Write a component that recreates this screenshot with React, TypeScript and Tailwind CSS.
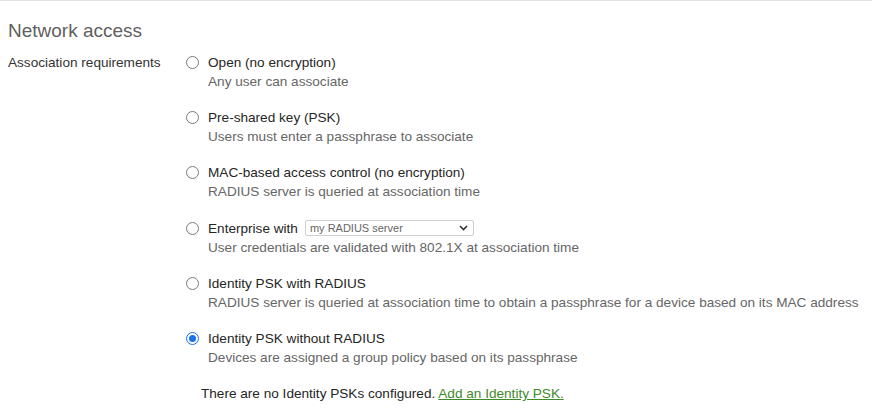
import React from "react";

type Opt = { label: string; desc: string; checked?: boolean; select?: boolean };

const options: Opt[] = [
  { label: "Open (no encryption)", desc: "Any user can associate" },
  { label: "Pre-shared key (PSK)", desc: "Users must enter a passphrase to associate" },
  { label: "MAC-based access control (no encryption)", desc: "RADIUS server is queried at association time" },
  { label: "Enterprise with", desc: "User credentials are validated with 802.1X at association time", select: true },
  { label: "Identity PSK with RADIUS", desc: "RADIUS server is queried at association time to obtain a passphrase for a device based on its MAC address" },
  { label: "Identity PSK without RADIUS", desc: "Devices are assigned a group policy based on its passphrase", checked: true },
];

function Radio({ checked }: { checked?: boolean }) {
  if (checked) {
    return (
      <span className="mt-[3px] flex h-[13px] w-[13px] shrink-0 items-center justify-center rounded-full border-[1.5px] border-[#1a73e8] bg-white">
        <span className="h-[7px] w-[7px] rounded-full bg-[#1a73e8]" />
      </span>
    );
  }
  return <span className="mt-[3px] block h-[13px] w-[13px] shrink-0 rounded-full border border-[#7a7a7a] bg-white" />;
}

export default function App() {
  return (
    <div
      className="h-[414px] w-full overflow-hidden border-t border-[#e2e2e2] bg-white pl-2 text-[13.6px] leading-[19px] text-[#333]"
      style={{ fontFamily: '"Liberation Sans", Arial, sans-serif' }}
    >
      <div className="pt-[18px] text-[19px] leading-[24px] text-[#5f5f5f]">Network access</div>
      <div className="mt-[10px] flex">
        <div className="w-[178px] shrink-0 text-[#333]">Association requirements</div>
        <div className="flex flex-col gap-[17.2px]">
          {options.map((o) => (
            <div key={o.label} className="flex items-start">
              <Radio checked={o.checked} />
              <div className="ml-[9px] flex flex-col">
                <div className="flex h-[19px] items-center text-[#262626]">
                  <span>{o.label}</span>
                  {o.select && (
                    <div className="ml-[7px] flex h-[16px] w-[169px] items-center justify-between rounded-[2px] border border-[#cfcfcf] bg-white pl-[4px] pr-[5px] text-[11px] leading-[14px] text-[#666]">
                      <span>my RADIUS server</span>
                      <svg width="9" height="6" viewBox="0 0 9 6">
                        <path d="M1 1 L4.5 4.5 L8 1" fill="none" stroke="#333" strokeWidth="1.6" />
                      </svg>
                    </div>
                  )}
                </div>
                <div className="text-[#666]">{o.desc}</div>
              </div>
            </div>
          ))}
          <div className="ml-[15px] text-[#262626]">
            There are no Identity PSKs configured.{" "}
            <a href="#" className="text-[#3f8a2b] underline">
              Add an Identity PSK.
            </a>
          </div>
        </div>
      </div>
    </div>
  );
}
